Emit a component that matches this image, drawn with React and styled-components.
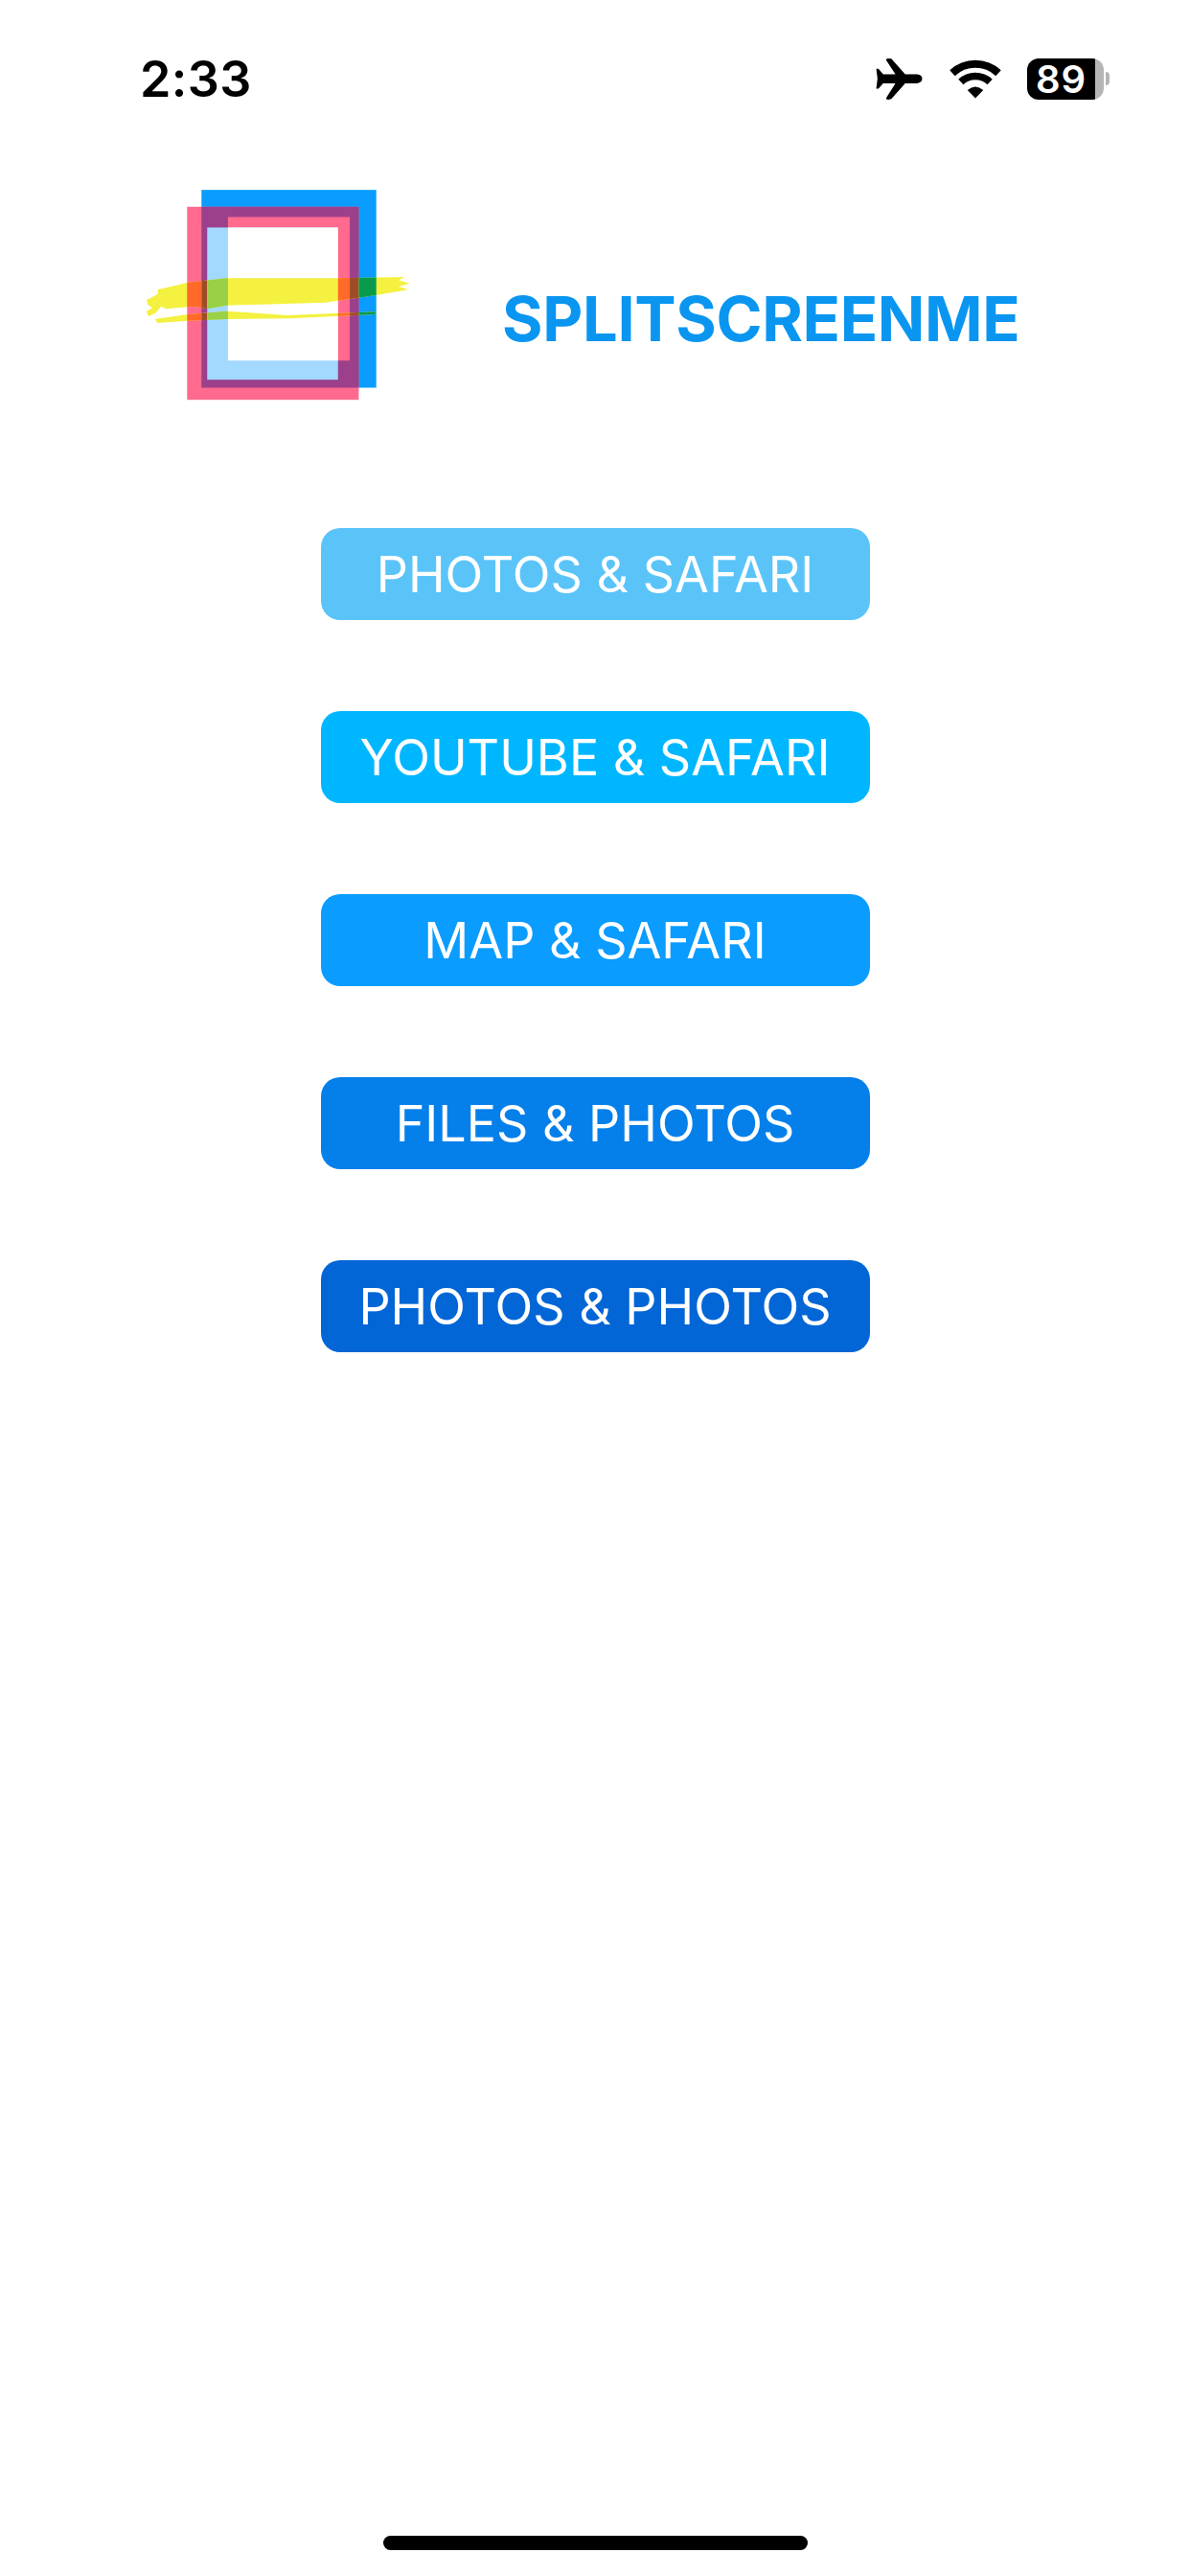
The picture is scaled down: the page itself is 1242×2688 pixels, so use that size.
import styled, { createGlobalStyle } from 'styled-components';

const GlobalStyle = createGlobalStyle`
  html, body {
    margin: 0;
    padding: 0;
    background: #fff;
  }
  body {
    font-family: Inter, "Liberation Sans", sans-serif;
  }
`;

const actions = [
  { label: 'PHOTOS & SAFARI', color: '#5ac4f9' },
  { label: 'YOUTUBE & SAFARI', color: '#00b7ff' },
  { label: 'MAP & SAFARI', color: '#0a9cff' },
  { label: 'FILES & PHOTOS', color: '#0580ea' },
  { label: 'PHOTOS & PHOTOS', color: '#0366d6' },
];

const BRUSH =
  'M135 398 L230 375 L350 362 L700 362 L910 358 L890 368 L925 378 L890 388 L920 398 L820 415 L660 438 L350 447 L290 458 L250 450 L160 458 L145 450 L130 470 L105 482 L100 465 L118 455 L104 445 L100 430 L135 412 Z M125 490 L230 475 L350 465 L540 478 L820 467 L815 475 L550 488 L350 490 L230 495 L135 502 Z';

function Logo() {
  return (
    <LogoSvg viewBox="100 85 826 660">
      <defs>
        <clipPath id="brush">
          <path d={BRUSH} />
        </clipPath>
      </defs>
      <rect x="272" y="85" width="548" height="620" fill="#0a9dff" />
      <rect x="227" y="138" width="538" height="605" fill="#ff6a8e" />
      <rect x="272" y="138" width="493" height="567" fill="#9c408b" />
      <rect x="355" y="170" width="382" height="450" fill="#ff6a8e" />
      <rect x="290" y="203" width="410" height="477" fill="#a3d8ff" />
      <rect x="355" y="203" width="345" height="417" fill="#fff" />
      <path d={BRUSH} fill="#f4f140" />
      <g clipPath="url(#brush)">
        <rect x="227" y="340" width="45" height="170" fill="#ff6a2a" />
        <rect x="272" y="340" width="18" height="170" fill="#a04a28" />
        <rect x="290" y="340" width="65" height="170" fill="#98d046" />
        <rect x="700" y="340" width="37" height="170" fill="#ff6a2a" />
        <rect x="737" y="340" width="28" height="170" fill="#a04a28" />
        <rect x="765" y="340" width="55" height="170" fill="#0a9a4c" />
      </g>
    </LogoSvg>
  );
}

export default function App() {
  return (
    <>
      <GlobalStyle />
      <Page>
        <StatusBar>
          <Clock>2:33</Clock>
          <StatusIcons>
            <svg width="49" height="43" viewBox="102 64 146 131">
              <path
                fill="#000"
                d="M102 97 L109 97 L124 114 L163 114 L134 70 Q132 64 140 64 L150 65 L194 114 L232 114 Q248 116 248 128 Q248 141 232 143 L194 143 L150 193 L140 195 Q132 195 134 189 L163 143 L124 143 L109 160 L102 160 L106 128 Z"
              />
            </svg>
            <WifiIcon viewBox="330 64 164 124" width="54" height="41">
              <path d="M339 107 A107 107 0 0 1 485 107" fill="none" stroke="#000" strokeWidth="24" />
              <path d="M366 135 A68 68 0 0 1 458 135" fill="none" stroke="#000" strokeWidth="23" />
              <path d="M412 187 L387 161 Q412 139 437 161 Z" fill="#000" />
            </WifiIcon>
            <Battery>
              <BatteryBody>
                <BatteryLevel>89</BatteryLevel>
              </BatteryBody>
              <BatteryNub />
            </Battery>
          </StatusIcons>
        </StatusBar>

        <Header>
          <Logo />
          <Title>SPLITSCREENME</Title>
        </Header>

        <ActionList>
          {actions.map((action) => (
            <ActionButton key={action.label} $color={action.color}>
              {action.label}
            </ActionButton>
          ))}
        </ActionList>

        <HomeIndicator />
      </Page>
    </>
  );
}

const Page = styled.div`
  display: flex;
  flex-direction: column;
  width: 1242px;
  height: 2688px;
  overflow: hidden;
  background: #fff;
`;
const StatusBar = styled.div`
  display: flex;
  justify-content: space-between;
  align-items: center;
  height: 60px;
  margin-top: 52px;
  padding: 0 84px 0 146px;
`;
const Clock = styled.div`
  font-size: 52px;
  font-weight: 600;
  letter-spacing: 0.4px;
  color: #000;
`;
const StatusIcons = styled.div`
  display: flex;
  align-items: center;
`;
const WifiIcon = styled.svg`
  margin-left: 28px;
`;
const Battery = styled.div`
  display: flex;
  align-items: center;
  margin-left: 27px;
`;
const BatteryBody = styled.div`
  width: 80px;
  height: 43px;
  border-radius: 12px;
  background: linear-gradient(to right, #000 71px, #b5b5b5 71px);
`;
const BatteryLevel = styled.div`
  width: 71px;
  font-size: 40px;
  font-weight: 600;
  line-height: 43px;
  letter-spacing: 1px;
  text-align: center;
  color: #fff;
`;
const BatteryNub = styled.div`
  width: 4px;
  height: 14px;
  margin-left: 2px;
  border-radius: 0 7px 7px 0;
  background: #b5b5b5;
`;
const Header = styled.div`
  display: flex;
  margin-top: 86px;
  padding-left: 153px;
`;
const LogoSvg = styled.svg`
  width: 275px;
  height: 220px;
  flex: none;
`;
const Title = styled.div`
  margin: 95px 0 0 96px;
  font-size: 65px;
  font-weight: 700;
  line-height: 80px;
  letter-spacing: -0.35px;
  color: #0a96f0;
  white-space: nowrap;
`;
const ActionList = styled.div`
  display: flex;
  flex-direction: column;
  align-items: center;
  gap: 95px;
  margin-top: 133px;
`;
const ActionButton = styled.button`
  width: 573px;
  height: 96px;
  padding: 0;
  border: none;
  border-radius: 20px;
  background: ${(props) => props.$color};
  font-family: inherit;
  font-size: 52px;
  font-weight: 400;
  color: #fff;
  white-space: nowrap;
`;
const HomeIndicator = styled.div`
  width: 443px;
  height: 15px;
  margin: auto auto 27px;
  border-radius: 8px;
  background: #000;
`;
